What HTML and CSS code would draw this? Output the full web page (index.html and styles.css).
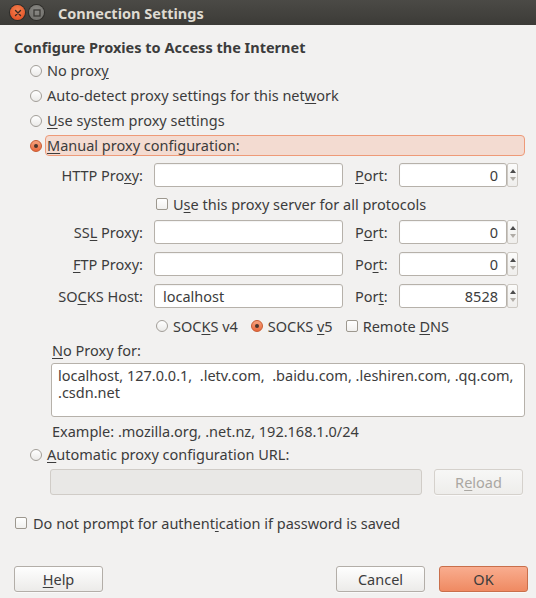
FILE: index.html
```html
<!DOCTYPE html>
<html lang="en">
<head>
  <meta charset="UTF-8" />
  <title>Connection Settings</title>
  <link rel="stylesheet" href="styles.css">
</head>
<body>
  <div class="window">
    <header class="titlebar">
      <span class="wbtn close">
        <svg width="8" height="8" viewBox="0 0 8 8"><path d="M1.5 1.5 L6.5 6.5 M6.5 1.5 L1.5 6.5" stroke="#3a2a24" stroke-width="1.4" stroke-linecap="round"/></svg>
      </span>
      <span class="wbtn mini">
        <svg width="8" height="8" viewBox="0 0 8 8"><rect x="1" y="1" width="6" height="6" fill="none" stroke="#3c3b37" stroke-width="1.3"/></svg>
      </span>
      <span class="title">Connection Settings</span>
    </header>

    <main class="dialog">
      <h1 class="heading">Configure Proxies to Access the Internet</h1>

      <div class="choices">
        <label class="opt"><span class="radio"></span><span class="text">No prox<u>y</u></span></label>
        <label class="opt"><span class="radio"></span><span class="text">Auto-detect proxy settings for this net<u>w</u>ork</span></label>
        <label class="opt"><span class="radio"></span><span class="text"><u>U</u>se system proxy settings</span></label>
        <label class="opt"><span class="radio on"></span><span class="text focus"><u>M</u>anual proxy configuration:</span></label>
      </div>

      <div class="proxies">
        <span class="lbl">HTTP Pro<u>x</u>y:</span>
        <span class="field"></span>
        <span class="port"><u>P</u>ort:</span>
        <span class="spin"><span class="field num">0</span><span class="arrows"><i class="up"></i><i class="down"></i></span></span>

        <label class="wide check-row"><span class="check"></span><span>U<u>s</u>e this proxy server for all protocols</span></label>

        <span class="lbl">SS<u>L</u> Proxy:</span>
        <span class="field"></span>
        <span class="port">P<u>o</u>rt:</span>
        <span class="spin"><span class="field num">0</span><span class="arrows"><i class="up"></i><i class="down"></i></span></span>

        <span class="lbl"><u>F</u>TP Proxy:</span>
        <span class="field"></span>
        <span class="port">Po<u>r</u>t:</span>
        <span class="spin"><span class="field num">0</span><span class="arrows"><i class="up"></i><i class="down"></i></span></span>

        <span class="lbl">SO<u>C</u>KS Host:</span>
        <span class="field">localhost</span>
        <span class="port">Por<u>t</u>:</span>
        <span class="spin"><span class="field num">8528</span><span class="arrows"><i class="up"></i><i class="down"></i></span></span>

        <div class="wide socks">
          <label class="mini-opt"><span class="radio"></span><span>SOC<u>K</u>S v4</span></label>
          <label class="mini-opt"><span class="radio on"></span><span>SOCKS <u>v</u>5</span></label>
          <label class="mini-opt"><span class="check"></span><span>Remote <u>D</u>NS</span></label>
        </div>
      </div>

      <div class="noproxy-label"><u>N</u>o Proxy for:</div>
      <div class="textbox">localhost, 127.0.0.1,  .letv.com,  .baidu.com, .leshiren.com, .qq.com,
.csdn.net</div>
      <div class="example">Example: .mozilla.org, .net.nz, 192.168.1.0/24</div>

      <label class="opt auto"><span class="radio"></span><span class="text"><u>A</u>utomatic proxy configuration URL:</span></label>
      <div class="url-row">
        <span class="field disabled"></span>
        <button class="btn disabled-btn">R<u>e</u>load</button>
      </div>

      <label class="opt auth"><span class="check"></span><span>Do not prompt for authent<u>i</u>cation if password is saved</span></label>

      <div class="actions">
        <button class="btn"><u>H</u>elp</button>
        <span class="spacer"></span>
        <button class="btn">Cancel</button>
        <button class="btn ok">OK</button>
      </div>
    </main>
  </div>
</body>
</html>
```

FILE: styles.css
```css
* { margin: 0; padding: 0; box-sizing: border-box; }
html, body {
  width: 536px;
  height: 598px;
  overflow: hidden;
  background: #f2f1f0;
  font-family: 'Noto Sans', 'DejaVu Sans', sans-serif;
  font-size: 14.5px;
  color: #3c3c3c;
}
u { text-decoration: underline; text-underline-offset: 2px; }

.window { display: flex; flex-direction: column; height: 598px; }

/* --- title bar --- */
.titlebar {
  height: 25px;
  display: flex;
  align-items: center;
  padding-left: 10px;
  background: linear-gradient(#4b4a46, #3c3b37);
}
.wbtn {
  width: 15px;
  height: 15px;
  border-radius: 50%;
  display: flex;
  align-items: center;
  justify-content: center;
  margin-right: 4px;
}
.wbtn.close {
  background: radial-gradient(circle at 50% 35%, #f4814f, #e0461c);
  box-shadow: 0 0 0 1px #2e2d2a;
}
.wbtn.mini {
  background: radial-gradient(circle at 50% 35%, #8a8985, #6c6b67);
  box-shadow: 0 0 0 1px #2e2d2a;
}
.title {
  margin-left: 10px;
  color: #dfdbd2;
  font-weight: bold;
  font-size: 14.5px;
}

/* --- dialog body --- */
.dialog {
  flex: 1;
  display: flex;
  flex-direction: column;
  padding: 12px 11px 6px 14px;
}
.heading {
  font-size: 14.5px;
  font-weight: bold;
  line-height: 20px;
}
.choices { margin-top: 1px; }
.opt {
  height: 25px;
  display: flex;
  align-items: center;
  padding-left: 16px;
}
.opt .radio { margin-right: 5px; }
.opt .text { line-height: 19px; }
.opt .focus {
  flex: 1;
  margin-left: -2px;
  padding-left: 1px;
  border: 1px solid #ee9a78;
  border-radius: 4px;
  background: #f3dbd1;
  height: 21px;
}

.radio {
  width: 12px;
  height: 12px;
  border-radius: 50%;
  border: 1px solid #a29e98;
  background: linear-gradient(#ffffff, #ebeae8);
  flex-shrink: 0;
  position: relative;
}
.radio.on {
  border-color: #c75a31;
  background: linear-gradient(#f7a27d, #e9693c);
}
.radio.on::after {
  content: "";
  position: absolute;
  left: 3px;
  top: 3px;
  width: 4px;
  height: 4px;
  border-radius: 50%;
  background: #4a352c;
}
.check {
  width: 12px;
  height: 12px;
  border: 1px solid #9d988f;
  border-radius: 2px;
  background: linear-gradient(#ffffff, #f1f0ee);
  flex-shrink: 0;
}

/* --- manual proxy grid --- */
.proxies {
  margin: 5px 0 0 33px;
  display: grid;
  grid-template-columns: 96px 189px 34px 119px;
  grid-template-rows: 24px 17px 24px 24px 24px 20px;
  column-gap: 11px;
  row-gap: 8px;
  align-items: center;
}
.lbl { text-align: right; }
.port { padding-left: 1px; }
.field {
  height: 24px;
  border: 1px solid #b6b1aa;
  border-radius: 3px;
  background: #fff;
  box-shadow: inset 0 1px 1px rgba(0, 0, 0, 0.05);
  display: flex;
  align-items: center;
  padding: 0 8px;
}
.spin { display: flex; align-items: center; }
.spin .field { width: 108px; }
.num { justify-content: flex-end; }
.arrows {
  width: 11px;
  height: 24px;
  border: 1px solid #cdc9c3;
  border-radius: 2px;
  background: linear-gradient(#fbfbfa, #efeeec);
  display: flex;
  flex-direction: column;
  align-items: center;
  justify-content: space-between;
  padding: 5px 0 5px;
}
.arrows i {
  width: 0;
  height: 0;
  border-left: 3px solid transparent;
  border-right: 3px solid transparent;
}
.arrows .up { border-bottom: 4px solid #4c4c4c; }
.arrows .down { border-top: 4px solid #b0aca6; }

.wide { grid-column: 2 / -1; }
.check-row, .socks, .mini-opt { display: flex; align-items: center; }
.check-row { padding-left: 2px; }
.check-row .check { margin-right: 5px; }
.socks { padding-left: 2px; gap: 13px; }
.mini-opt .radio, .mini-opt .check { margin-right: 5px; }

/* --- exceptions --- */
.noproxy-label { margin: 5px 0 0 38px; line-height: 18px; }
.textbox {
  margin: 4px 0 0 37px;
  height: 54px;
  border: 1px solid #b6b1aa;
  border-radius: 3px;
  background: #fff;
  padding: 3px 6px;
  line-height: 16.5px;
  white-space: pre;
  overflow: hidden;
}
.example { margin: 5px 0 0 38px; line-height: 18px; }
.auto { margin-top: 2px; }

.url-row {
  margin: 2px 2px 0 36px;
  display: flex;
  gap: 12px;
}
.url-row .field { flex: 1; height: 26px; }
.field.disabled {
  background: #e9e8e6;
  border-color: #d0ccc7;
  box-shadow: none;
}

.auth { margin-top: 15px; padding-left: 1px; }
.auth .check { margin-right: 6px; }

/* --- buttons --- */
.btn {
  width: 89px;
  height: 26px;
  font: inherit;
  color: #3c3c3c;
  border: 1px solid #b3aea8;
  border-radius: 3px;
  background: linear-gradient(#fefefe, #ecebe9);
  box-shadow: 0 1px 0 rgba(255, 255, 255, 0.6);
}
.disabled-btn {
  color: #aaa7a2;
  border-color: #d5d1cc;
  background: linear-gradient(#f7f7f6, #eeedeb);
}
.actions {
  margin: auto -3px 0 0;
  display: flex;
  gap: 14px;
}
.spacer { flex: 1; }
.ok {
  border-color: #c96f4b;
  background: linear-gradient(#f9ad8f, #ef8a62);
}
```
